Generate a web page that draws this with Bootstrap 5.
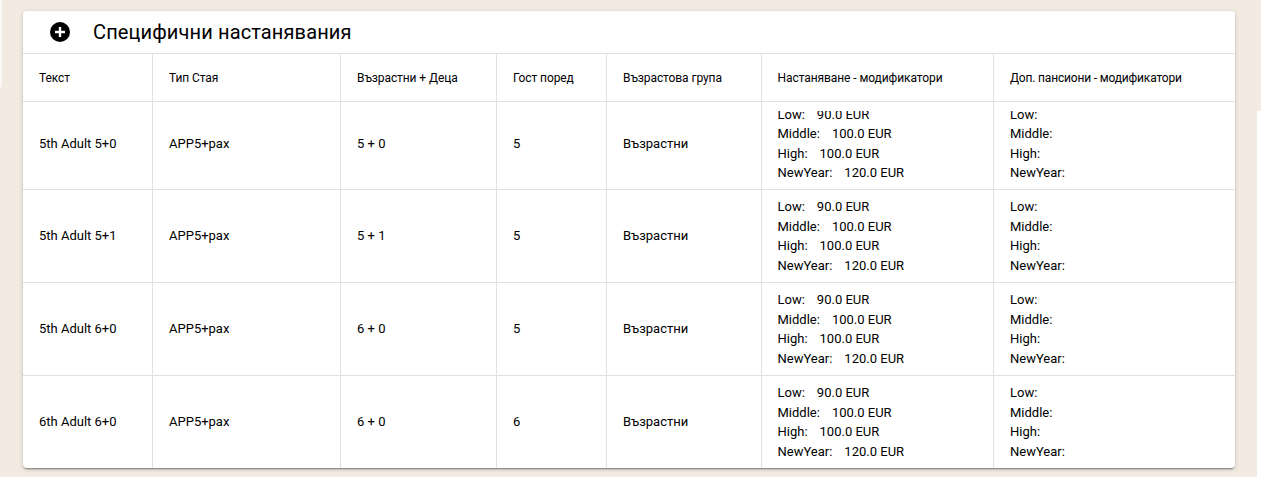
<!DOCTYPE html>
<html lang="bg">
<head>
<meta charset="utf-8">
<title>Специфични настанявания</title>
<link href="https://cdn.jsdelivr.net/npm/bootstrap@5.3.0/dist/css/bootstrap.min.css" rel="stylesheet">
<style>
html, body { height: 477px; overflow: hidden; }
body { background: linear-gradient(#fff,#fff) right bottom / 4px 366px no-repeat, linear-gradient(#fbf8f5,#fbf8f5) left top / 2px 87px no-repeat, #f3ebe2; font-family: Roboto, "Noto Sans", sans-serif; color: #000; }
.page-pad { padding: 11px 26px 0 23px; }
.sheet { background: #fff; border-radius: 4px; height: 457px; overflow: hidden; box-shadow: 0 2px 2px -1px rgba(0,0,0,.45), 0 1px 5px rgba(0,0,0,.16); }
.sheet-head { height: 43px; border-bottom: 1px solid #e0e0e0; padding-left: 26px; gap: 22px; }
.sheet-title { font-size: 20px; font-weight: 400; line-height: 1; margin: 0; letter-spacing: .13px; }
.spec-table { width: 1212px; table-layout: fixed; border-collapse: collapse; margin: 0; }
.spec-table th, .spec-table td { font-size: 13px; line-height: 19.5px; font-weight: 400; padding: 0 16px; vertical-align: middle; border: 1px solid #e0e0e0; border-top: 0; }
.spec-table th { font-size: 12px; height: 47px; letter-spacing: -.08px; padding-top: 3px; }
.spec-table th:last-child { letter-spacing: -.17px; }
.spec-table td { height: 93px; }
.spec-table tr > :nth-child(n+2):nth-child(-n+5), .spec-table tr > :last-child { padding-left: 16.5px; }
.spec-table tr > :first-child { border-left: 0; }
.spec-table tr > :last-child { border-right: 0; }
.spec-table tbody tr:last-child td { border-bottom: 0; }
.mods { display: flex; flex-direction: column; padding-top: 1px; }
.first-row td { height: 88px; padding-bottom: 3px; }
.first-row td.mod-cell { vertical-align: top; padding-bottom: 0; }
.first-row .mods { height: 72px; margin-top: 9px; overflow: hidden; justify-content: flex-end; padding: 0; }
.gapv { margin-left: 12px; }
</style>
</head>
<body>
<div class="page-pad">
  <div class="sheet">
    <div class="sheet-head d-flex align-items-center">
      <svg width="22" height="22" viewBox="0 0 22 22"><circle cx="11" cy="11" r="10" fill="#000"/><path d="M11 6v10M6 11h10" stroke="#fff" stroke-width="2.4"/></svg>
      <h2 class="sheet-title">Специфични настанявания</h2>
    </div>
    <table class="spec-table">
      <colgroup><col style="width:129px"><col style="width:188px"><col style="width:156px"><col style="width:110px"><col style="width:155px"><col style="width:232px"><col style="width:242px"></colgroup>
      <thead><tr><th>Текст</th><th>Тип Стая</th><th>Възрастни + Деца</th><th>Гост поред</th><th>Възрастова група</th><th>Настаняване - модификатори</th><th>Доп. пансиони - модификатори</th></tr></thead>
      <tbody>
        <tr class="first-row"><td>5th Adult 5+0</td><td>APP5+pax</td><td>5 + 0</td><td>5</td><td>Възрастни</td>
          <td class="mod-cell"><div class="mods"><span class="flex-shrink-0">Low:<span class="gapv">90.0 EUR</span></span><span class="flex-shrink-0">Middle:<span class="gapv">100.0 EUR</span></span><span class="flex-shrink-0">High:<span class="gapv">100.0 EUR</span></span><span class="flex-shrink-0">NewYear:<span class="gapv">120.0 EUR</span></span></div></td>
          <td class="mod-cell"><div class="mods"><span class="flex-shrink-0">Low:</span><span class="flex-shrink-0">Middle:</span><span class="flex-shrink-0">High:</span><span class="flex-shrink-0">NewYear:</span></div></td></tr>
        <tr><td>5th Adult 5+1</td><td>APP5+pax</td><td>5 + 1</td><td>5</td><td>Възрастни</td>
          <td><div class="mods"><span>Low:<span class="gapv">90.0 EUR</span></span><span>Middle:<span class="gapv">100.0 EUR</span></span><span>High:<span class="gapv">100.0 EUR</span></span><span>NewYear:<span class="gapv">120.0 EUR</span></span></div></td>
          <td><div class="mods"><span>Low:</span><span>Middle:</span><span>High:</span><span>NewYear:</span></div></td></tr>
        <tr><td>5th Adult 6+0</td><td>APP5+pax</td><td>6 + 0</td><td>5</td><td>Възрастни</td>
          <td><div class="mods"><span>Low:<span class="gapv">90.0 EUR</span></span><span>Middle:<span class="gapv">100.0 EUR</span></span><span>High:<span class="gapv">100.0 EUR</span></span><span>NewYear:<span class="gapv">120.0 EUR</span></span></div></td>
          <td><div class="mods"><span>Low:</span><span>Middle:</span><span>High:</span><span>NewYear:</span></div></td></tr>
        <tr><td>6th Adult 6+0</td><td>APP5+pax</td><td>6 + 0</td><td>6</td><td>Възрастни</td>
          <td><div class="mods"><span>Low:<span class="gapv">90.0 EUR</span></span><span>Middle:<span class="gapv">100.0 EUR</span></span><span>High:<span class="gapv">100.0 EUR</span></span><span>NewYear:<span class="gapv">120.0 EUR</span></span></div></td>
          <td><div class="mods"><span>Low:</span><span>Middle:</span><span>High:</span><span>NewYear:</span></div></td></tr>
      </tbody>
    </table>
  </div>
</div>
<script src="https://cdn.jsdelivr.net/npm/bootstrap@5.3.0/dist/js/bootstrap.bundle.min.js"></script>
</body>
</html>
